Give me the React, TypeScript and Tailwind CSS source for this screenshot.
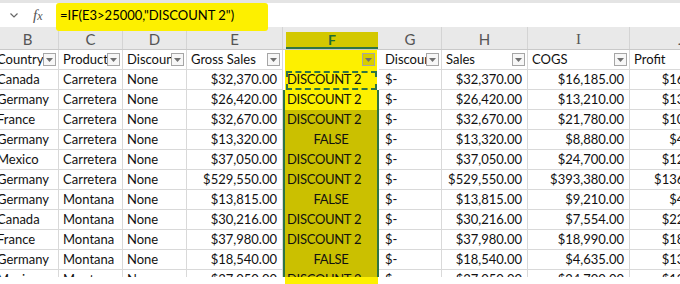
import React from "react";

const widths = ["w-[66px]", "w-[64px]", "w-[64px]", "w-[96px]", "w-[96px]", "w-[63px]", "w-[86px]", "w-[102px]", "w-[104px]"];
const letters = ["B", "C", "D", "E", "F", "G", "H", "I", "J"];
const headers = ["Country", "Product", "Discount", "Gross Sales", "", "Discount", "Sales", "COGS", "Profit"];

const rows: string[][] = [
  ["Canada", "Carretera", "None", "$32,370.00", "DISCOUNT 2", "$-", "$32,370.00", "$16,185.00", "$16,185.00"],
  ["Germany", "Carretera", "None", "$26,420.00", "DISCOUNT 2", "$-", "$26,420.00", "$13,210.00", "$13,210.00"],
  ["France", "Carretera", "None", "$32,670.00", "DISCOUNT 2", "$-", "$32,670.00", "$21,780.00", "$10,890.00"],
  ["Germany", "Carretera", "None", "$13,320.00", "FALSE", "$-", "$13,320.00", "$8,880.00", "$4,440.00"],
  ["Mexico", "Carretera", "None", "$37,050.00", "DISCOUNT 2", "$-", "$37,050.00", "$24,700.00", "$12,350.00"],
  ["Germany", "Carretera", "None", "$529,550.00", "DISCOUNT 2", "$-", "$529,550.00", "$393,380.00", "$136,170.00"],
  ["Germany", "Montana", "None", "$13,815.00", "FALSE", "$-", "$13,815.00", "$9,210.00", "$4,605.00"],
  ["Canada", "Montana", "None", "$30,216.00", "DISCOUNT 2", "$-", "$30,216.00", "$7,554.00", "$22,662.00"],
  ["France", "Montana", "None", "$37,980.00", "DISCOUNT 2", "$-", "$37,980.00", "$18,990.00", "$18,990.00"],
  ["Germany", "Montana", "None", "$18,540.00", "FALSE", "$-", "$18,540.00", "$4,635.00", "$13,905.00"],
  ["Mexico", "Montana", "None", "$37,050.00", "DISCOUNT 2", "$-", "$37,050.00", "$24,700.00", "$12,350.00"],
];

function Dropdown({ f }: { f?: boolean }) {
  return (
    <div
      className={
        "absolute right-[2px] top-[3px] w-[13px] h-[13px] border border-[#a6a6a6] flex items-center justify-center " +
        (f ? "bg-[#d8cd00]" : "bg-[#f7f7f7]")
      }
    >
      <svg width="7" height="4" viewBox="0 0 7 4">
        <path d="M0 0 L7 0 L3.5 4 Z" fill="#707070" />
      </svg>
    </div>
  );
}

function DataRow({ r, i }: { r: string[]; i: number }) {
  return (
    <div className="flex h-[20px] shrink-0">
      {r.map((v, c) => {
        const w = widths[c];
        if (c === 4) {
          const bright = i < 2;
          const isFalse = v === "FALSE";
          return (
            <div
              key={c}
              className={
                w +
                " relative shrink-0 h-[20px] border-x-2 bg-clip-padding flex items-center text-[13px] tracking-[-0.3px] " +
                (i === 0 ? "border-transparent " : "border-[#2e7445] ") +
                (bright ? "bg-[#fdf000] " : "bg-[#cbc000] ") +
                (isFalse ? "justify-center" : "justify-start pl-[2px]")
              }
            >
              {i === 0 && <div className="absolute left-[1px] right-0 top-[1px] bottom-[0px] border-2 border-dashed border-[#2e7445]" />}
              <span className="relative">{v}</span>
            </div>
          );
        }
        const right = c === 3 || c === 6 || c === 7 || c === 8;
        return (
          <div
            key={c}
            className={
              w +
              " shrink-0 h-[20px] border-r border-b border-[#d9d9d9] flex items-center overflow-hidden whitespace-nowrap " +
              (right ? "justify-end pr-[5px]" : c === 5 ? "pl-[6px]" : "pl-[4px]")
            }
          >
            {v}
          </div>
        );
      })}
    </div>
  );
}

export default function App() {
  return (
    <div
      className="relative w-[680px] h-[284px] overflow-hidden bg-white text-[13px] text-[#111]"
      style={{ fontFamily: "Lato, 'Noto Sans', sans-serif" }}
    >
      {/* formula bar */}
      <div className="h-[27px] border-t-[3px] border-[#e4e4e4] flex items-center bg-white">
        <div className="w-[26px] flex justify-center pl-[2px]">
          <svg width="8" height="5" viewBox="0 0 8 5">
            <path d="M0.5 0.5 L4 4 L7.5 0.5" fill="none" stroke="#666" strokeWidth="1.2" />
          </svg>
        </div>
        <div
          className="ml-[7px] text-[#555] italic text-[15px]"
          style={{ fontFamily: "'Liberation Serif', serif" }}
        >
          f<span className="text-[12px]">x</span>
        </div>
      </div>
      <div className="absolute left-[56px] top-[3px] w-[212px] h-[28px] rounded-[3px] bg-[#fdf000] z-10 flex items-center pl-[4px] pb-[2px] text-[13px] text-black">
        =IF(E3&gt;25000,"DISCOUNT 2")
      </div>

      <div className="-ml-[7px] flex flex-col">
        {/* column letters */}
        <div className="flex h-[23px] bg-[#e9e9e9] border-b border-[#c9c9c9]">
          {letters.map((l, c) => (
            <div
              key={l}
              className={
                widths[c] +
                " relative shrink-0 h-full flex items-center justify-center pt-[2px] text-[15px] " +
                (c === 4 ? "" : "border-r border-[#d4d4d4] text-[#555]") +
                (c === 0 ? " pl-[4px]" : "")
              }
              style={l === "I" ? { fontFamily: "'Liberation Serif', serif" } : undefined}
            >
              {c === 4 ? (
                <div className="absolute left-[3px] right-[1px] top-[5px] bottom-0 bg-[#d3c800] border-b-2 border-[#2e7445] flex items-center justify-center font-bold text-[#1f6b35] text-[14px]">
                  F
                </div>
              ) : (
                l
              )}
            </div>
          ))}
        </div>

        {/* header row */}
        <div className="flex h-[20px]">
          {headers.map((h, c) => (
            <div
              key={c}
              className={
                widths[c] +
                " relative shrink-0 h-[20px] flex items-center overflow-hidden whitespace-nowrap " +
                (c === 4
                  ? "border-x-2 border-transparent bg-clip-padding bg-[#fdf000]"
                  : "border-r border-b border-[#d9d9d9] " + (c === 5 ? "pl-[6px]" : "pl-[4px]"))
              }
            >
              {h}
              <Dropdown f={c === 4} />
            </div>
          ))}
        </div>

        {rows.slice(0, 10).map((r, i) => (
          <DataRow key={i} r={r} i={i} />
        ))}
        <div className="h-[7px] overflow-hidden shrink-0">
          <DataRow r={rows[10]} i={10} />
        </div>
        <div className="h-[7px] flex shrink-0">
          <div className="w-[292px] shrink-0" />
          <div className="w-[93px] shrink-0 bg-[#fdf000]" />
        </div>
      </div>
    </div>
  );
}
